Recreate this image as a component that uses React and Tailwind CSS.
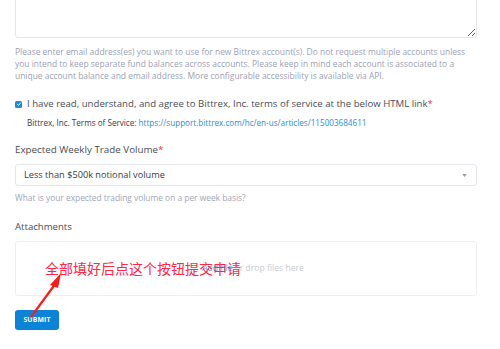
import React from 'react';

const Asterisk = () => <span className="text-[#e8383d]">*</span>;

const App = () => {
  return (
    <div className="relative w-[500px] h-[349px] overflow-hidden bg-white font-['Open_Sans',sans-serif]">
      <div className="w-[462px] ml-[15px]">
        {/* Email textarea (top is scrolled out of view) */}
        <textarea
          className="block w-full h-[80px] -mt-[42px] rounded-[3px] border border-[#e6e7eb] bg-white"
          readOnly
        />
        <p className="mt-[8px] text-[8.45px] leading-[12px] text-[#9ba1b4]">
          Please enter email address(es) you want to use for new Bittrex account(s). Do not request multiple accounts unless
          you intend to keep separate fund balances across accounts. Please keep in mind each account is associated to a
          unique account balance and email address. More configurable accessibility is available via API.
        </p>

        {/* Terms checkbox */}
        <div className="mt-[15px] flex items-center gap-[5px]">
          <span className="flex items-center justify-center w-[7px] h-[7px] rounded-[1.5px] bg-[#1e88e5]">
            <svg viewBox="0 0 10 10" className="w-[6px] h-[6px]">
              <path d="M2 5.2 L4.2 7.3 L8 2.8" fill="none" stroke="white" strokeWidth="1.6" />
            </svg>
          </span>
          <span className="text-[9.65px] leading-[14px] text-[#4b4c56]">
            I have read, understand, and agree to Bittrex, Inc. terms of service at the below HTML link<Asterisk />
          </span>
        </div>
        <p className="mt-[6px] ml-[12px] text-[8.15px] leading-[12px] text-[#3b3c44]">
          Bittrex, Inc. Terms of Service:{' '}
          <span className="text-[#2a8de0]">https://support.bittrex.com/hc/en-us/articles/115003684611</span>
        </p>

        {/* Trade volume */}
        <p className="mt-[14px] text-[9.8px] leading-[14px] text-[#4b4c56]">
          Expected Weekly Trade Volume<Asterisk />
        </p>
        <div className="mt-[7px] h-[22px] flex items-center justify-between rounded-[3px] border border-[#e6e7eb] pl-[8px] pr-[9px]">
          <span className="text-[9.2px] text-[#3b3c44]">Less than $500k notional volume</span>
          <svg viewBox="0 0 6 4" className="w-[5px] h-[3px]">
            <path d="M0 0 L6 0 L3 4 Z" fill="#9a9ba3" />
          </svg>
        </div>
        <p className="mt-[6px] text-[8.4px] leading-[11px] text-[#a0a6b8]">
          What is your expected trading volume on a per week basis?
        </p>

        {/* Attachments */}
        <p className="mt-[17px] text-[9.6px] leading-[13px] text-[#4b4c56]">Attachments</p>
        <div className="mt-[8px] h-[55px] flex items-center justify-center rounded-[3px] border border-[#eeeff2] pl-[14px]">
          <span className="text-[8.6px] text-[#c9cbd2]">
            <span className="text-[#5aa6ea]">Add file</span> or drop files here
          </span>
        </div>

        <button className="mt-[14px] w-[44px] h-[20px] rounded-[3px] bg-[#0b83d9] text-white text-[6.8px] font-bold tracking-[0.2px]">
          SUBMIT
        </button>
      </div>

      {/* Annotation */}
      <div className="absolute left-[45px] top-[258px] text-[14px] leading-[20px] text-[#ff2646] font-['Noto_Sans_CJK_SC',sans-serif]">
        全部填好后点这个按钮提交申请
      </div>
      <svg className="absolute left-0 top-0" width="500" height="349" viewBox="0 0 500 349">
        <line x1="31" y1="317" x2="56" y2="283" stroke="#ff1a1a" strokeWidth="2.2" />
        <path d="M61 273 L50 285 L58 288 Z" fill="#ff1a1a" />
      </svg>
    </div>
  );
};

export default App;
